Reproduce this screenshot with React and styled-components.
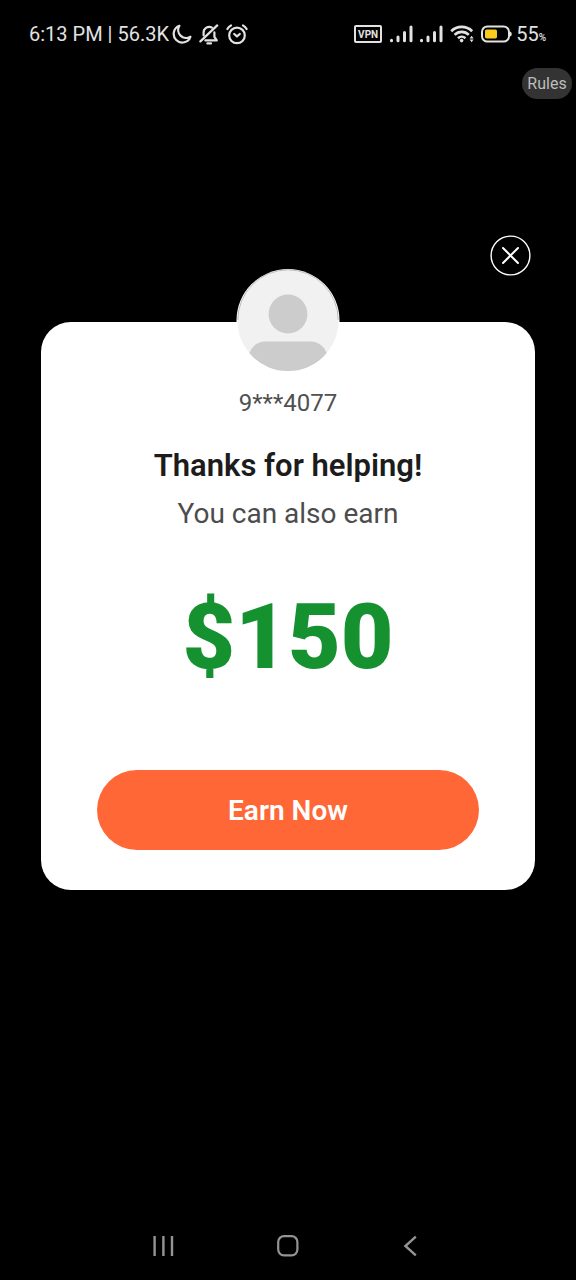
import React from "react";
import styled, { createGlobalStyle } from "styled-components";

const GlobalStyle = createGlobalStyle`
  * {
    box-sizing: border-box;
  }

  body {
    margin: 0;
    background: #000000;
    font-family: Roboto, "Liberation Sans", sans-serif;
  }

  button {
    padding: 0;
    border: none;
    background: none;
    font-family: inherit;
    cursor: pointer;
  }

  svg {
    display: block;
    flex-shrink: 0;
  }
`;

const Screen = styled.div`
  min-height: 100vh;
  display: flex;
  flex-direction: column;
  background: #000000;
`;

/* Status bar */

const StatusBar = styled.header`
  height: 68px;
  padding: 0 30px 0 29px;
  display: flex;
  align-items: center;
  justify-content: space-between;
  color: #e2e2e2;
`;

const StatusGroup = styled.div`
  display: flex;
  align-items: center;
  gap: ${(props) => props.$gap}px;
`;

const StatusText = styled.span`
  font-size: 20px;
  line-height: 24px;
  white-space: pre;
`;

const VpnBadge = styled.span`
  width: 28px;
  height: 18px;
  display: flex;
  align-items: center;
  justify-content: center;
  border: 2px solid #e2e2e2;
  border-radius: 2px;
  font-size: 10px;
  font-weight: 700;
`;

const Percent = styled.span`
  font-size: 10px;
  font-weight: 500;
  line-height: 1;
`;

const Toolbar = styled.div`
  padding-right: 4px;
  display: flex;
  justify-content: flex-end;
`;

const RulesButton = styled.button`
  width: 50px;
  height: 31px;
  border-radius: 16px;
  background: #333333;
  color: #bdbdbd;
  font-size: 16px;
`;

/* Dialog */

const Main = styled.main`
  flex: 1;
  padding: 136px 41px 40px;
`;

const CloseRow = styled.div`
  padding-right: 4px;
  margin-bottom: 46px;
  display: flex;
  justify-content: flex-end;
`;

const CloseButton = styled.button`
  width: 41px;
  height: 41px;
`;

const Card = styled.section`
  padding: 0 56px 40px;
  display: flex;
  flex-direction: column;
  align-items: center;
  border-radius: 30px;
  background: #ffffff;
`;

const Avatar = styled.div`
  margin-top: -53px;
`;

const UserId = styled.p`
  margin: 15px 0 0;
  color: #505050;
  font-size: 24px;
  line-height: 32px;
`;

const Title = styled.h1`
  margin: 27px 0 0;
  color: #1c1c1c;
  font-size: 31px;
  font-weight: 600;
  line-height: 40px;
`;

const Subtitle = styled.p`
  margin: 8px 0 0;
  color: #4c4c4c;
  font-size: 28px;
  line-height: 40px;
`;

const Amount = styled.p`
  margin: 53px 0 0;
  color: #169130;
  font-size: 91px;
  font-weight: 900;
  line-height: 100px;
`;

const EarnButton = styled.button`
  width: 100%;
  height: 80px;
  margin-top: 83px;
  border-radius: 40px;
  background: #ff6737;
  color: #ffffff;
  font-size: 28px;
  font-weight: 600;
`;

/* System navigation */

const NavBar = styled.nav`
  height: 69px;
  display: flex;
  justify-content: center;
`;

const NavButton = styled.button`
  width: 124px;
  display: flex;
  align-items: center;
  justify-content: center;
  color: #949494;
`;

const MoonIcon = () => (
  <svg width="20" height="20" viewBox="0 0 20 20" fill="none" stroke="currentColor" strokeWidth="2.2" strokeLinejoin="round">
    <path d="M7.4 1.8A8.6 8.6 0 1 0 18.4 12.8 8 8 0 0 1 7.4 1.8Z" />
  </svg>
);

const MutedBellIcon = () => (
  <svg width="20" height="21" viewBox="0 0 20 21" fill="none" stroke="currentColor" strokeWidth="2.2" strokeLinecap="round" strokeLinejoin="round">
    <path d="M4.6 11.4V8.6A5.6 5.6 0 0 1 13 3.6" />
    <path d="M15.4 8.4V12.8L17.8 16.4H6.4" />
    <path d="M18.2 1.4L1.4 17.4" />
    <path d="M8.4 19.4H12" />
  </svg>
);

const AlarmIcon = () => (
  <svg width="22" height="21" viewBox="0 0 22 21" fill="none" stroke="currentColor" strokeWidth="2.2" strokeLinecap="round" strokeLinejoin="round">
    <circle cx="11" cy="11.4" r="7.8" />
    <path d="M8.2 10L11 12.4L13.8 10" />
    <path d="M1.4 5Q2.6 2.6 5 1.4" />
    <path d="M20.6 5Q19.4 2.6 17 1.4" />
  </svg>
);

const SignalIcon = () => (
  <svg width="24" height="18" viewBox="0 0 24 18" fill="none" stroke="currentColor" strokeWidth="3" strokeLinecap="round">
    <path d="M2.5 15.2V15.8" />
    <path d="M9 12V15.8" />
    <path d="M15.5 7.5V15.8" />
    <path d="M22 2V15.8" />
  </svg>
);

const WifiIcon = () => (
  <svg width="24" height="18" viewBox="0 0 24 18" fill="none" stroke="currentColor" strokeWidth="2.6">
    <path d="M1.2 6.2A15 15 0 0 1 22.2 6.2" />
    <path d="M4.6 9.8A10 10 0 0 1 18.8 9.8" />
    <path d="M8 13.2A5.4 5.4 0 0 1 15.4 13.2" />
    <circle cx="11.6" cy="15.6" r="1.8" fill="currentColor" stroke="none" />
    <path d="M19.6 13.4L21.6 10.8L23.6 13.4ZM19.6 14.6L21.6 17.2L23.6 14.6Z" fill="currentColor" stroke="none" />
  </svg>
);

const BatteryIcon = () => (
  <svg width="31" height="18" viewBox="0 0 31 18" fill="none">
    <rect x="1" y="1.4" width="27" height="15.2" rx="5.4" stroke="currentColor" strokeWidth="2" />
    <rect x="4" y="4.6" width="12" height="8.8" rx="1.6" fill="#f8cb1d" />
    <path d="M29 6.4Q30.8 7 30.8 9T29 11.6Z" fill="currentColor" />
  </svg>
);

const CloseIcon = () => (
  <svg width="41" height="41" viewBox="0 0 41 41" fill="none" stroke="#ffffff" strokeLinecap="round">
    <circle cx="20.5" cy="20.5" r="19.4" strokeWidth="1.4" />
    <path d="M13 13L28 28M28 13L13 28" strokeWidth="2" />
  </svg>
);

const PersonPicture = () => (
  <svg width="104" height="103" viewBox="0 0 104 103">
    <clipPath id="face">
      <circle cx="52" cy="51.5" r="50.6" />
    </clipPath>
    <circle cx="52" cy="51.5" r="51.5" fill="#ffffff" />
    <circle cx="52" cy="51.5" r="50.6" fill="#f1f1f1" />
    <path d="M1.8 51A50.2 50.2 0 0 1 102.2 51" fill="none" stroke="#999999" strokeWidth="0.6" />
    <g clipPath="url(#face)" fill="#cccccc">
      <circle cx="52" cy="45" r="19.4" />
      <path d="M12 103V88Q16 73 29 72.5H75Q88 73 92 88V103Z" />
    </g>
  </svg>
);

const RecentsIcon = () => (
  <svg width="22" height="22" viewBox="0 0 22 22" fill="none" stroke="currentColor" strokeWidth="2.4">
    <path d="M1.6 1V21M10.4 1V21M19 1V21" />
  </svg>
);

const HomeIcon = () => (
  <svg width="22" height="22" viewBox="0 0 22 22" fill="none" stroke="currentColor" strokeWidth="2.2">
    <rect x="1.2" y="1.2" width="19.2" height="19.2" rx="5.8" />
  </svg>
);

const BackIcon = () => (
  <svg width="18" height="22" viewBox="0 0 18 22" fill="none" stroke="currentColor" strokeWidth="2.4">
    <path d="M12.8 1.6L2.4 11L12.8 20.4" />
  </svg>
);

const App = () => {
  return (
    <Screen>
      <GlobalStyle />
      <StatusBar>
        <StatusGroup $gap={7}>
          <StatusGroup $gap={3}>
            <StatusText>6:13 PM | 56.3K</StatusText>
            <MoonIcon />
          </StatusGroup>
          <MutedBellIcon />
          <AlarmIcon />
        </StatusGroup>
        <StatusGroup $gap={7}>
          <VpnBadge>VPN</VpnBadge>
          <StatusGroup $gap={6}>
            <SignalIcon />
            <SignalIcon />
          </StatusGroup>
          <WifiIcon />
          <StatusGroup $gap={4}>
            <BatteryIcon />
            <StatusText>
              55<Percent>%</Percent>
            </StatusText>
          </StatusGroup>
        </StatusGroup>
      </StatusBar>
      <Toolbar>
        <RulesButton type="button">Rules</RulesButton>
      </Toolbar>
      <Main>
        <CloseRow>
          <CloseButton type="button" aria-label="Close">
            <CloseIcon />
          </CloseButton>
        </CloseRow>
        <Card>
          <Avatar>
            <PersonPicture />
          </Avatar>
          <UserId>9***4077</UserId>
          <Title>Thanks for helping!</Title>
          <Subtitle>You can also earn</Subtitle>
          <Amount>$150</Amount>
          <EarnButton type="button">Earn Now</EarnButton>
        </Card>
      </Main>
      <NavBar>
        <NavButton type="button" aria-label="Recent apps">
          <RecentsIcon />
        </NavButton>
        <NavButton type="button" aria-label="Home">
          <HomeIcon />
        </NavButton>
        <NavButton type="button" aria-label="Back">
          <BackIcon />
        </NavButton>
      </NavBar>
    </Screen>
  );
};

export default App;
